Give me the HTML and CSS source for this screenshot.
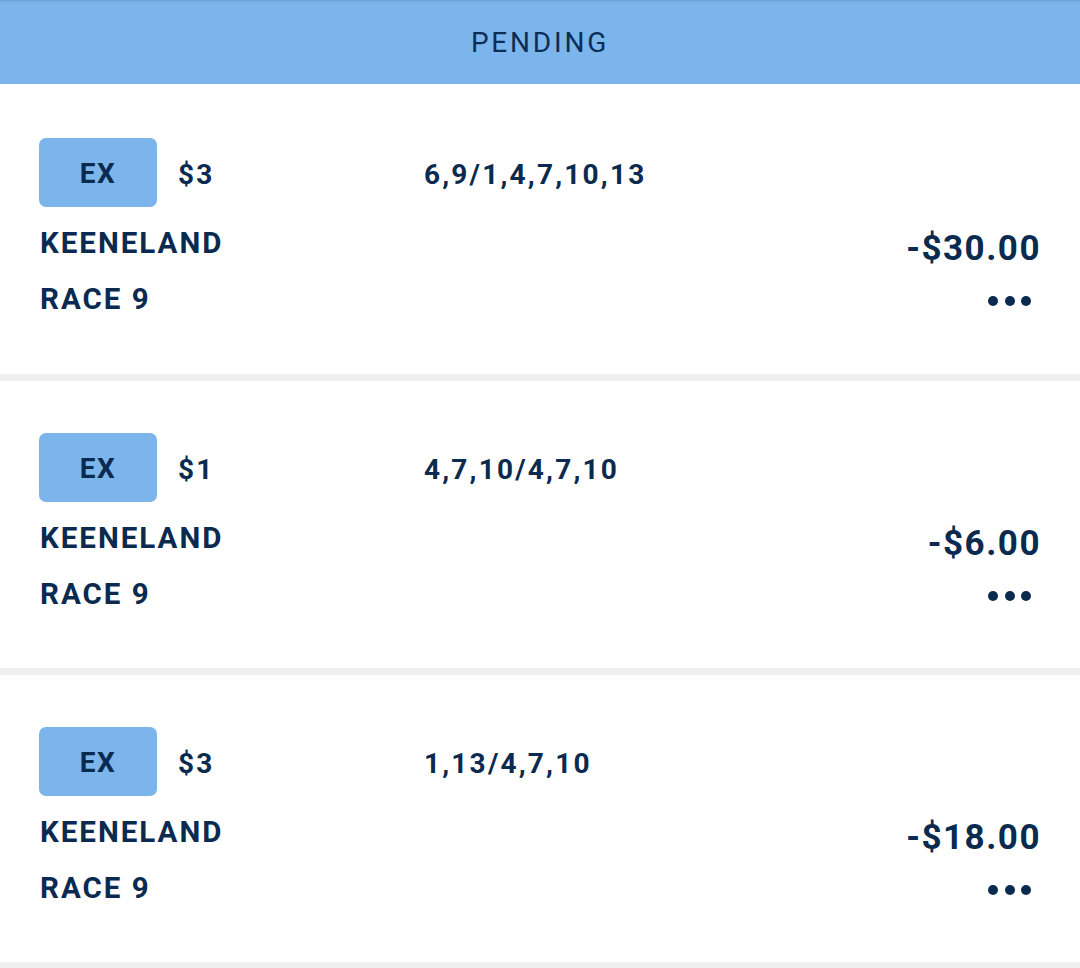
FILE: index.html
```html
<!DOCTYPE html>
<html lang="en">
<head>
	<meta charset="UTF-8">
	<meta name="viewport" content="width=device-width, initial-scale=1.0">
	<title>Pending</title>
	<link rel="stylesheet" href="styles.css">
</head>
<body>
	<div class="header">PENDING</div>

	<div class="bets">
		<div class="bet">
			<div class="betTop">
				<div class="betLeft">
					<span class="badge">EX</span>
					<span class="stake">$3</span>
				</div>
				<span class="legs">6,9/1,4,7,10,13</span>
			</div>
			<div class="betBottom">
				<div class="track">
					<p>KEENELAND</p>
					<p>RACE 9</p>
				</div>
				<div class="total">
					<p class="amount">-$30.00</p>
					<p class="more"><i></i><i></i><i></i></p>
				</div>
			</div>
		</div>

		<div class="bet">
			<div class="betTop">
				<div class="betLeft">
					<span class="badge">EX</span>
					<span class="stake">$1</span>
				</div>
				<span class="legs">4,7,10/4,7,10</span>
			</div>
			<div class="betBottom">
				<div class="track">
					<p>KEENELAND</p>
					<p>RACE 9</p>
				</div>
				<div class="total">
					<p class="amount">-$6.00</p>
					<p class="more"><i></i><i></i><i></i></p>
				</div>
			</div>
		</div>

		<div class="bet">
			<div class="betTop">
				<div class="betLeft">
					<span class="badge">EX</span>
					<span class="stake">$3</span>
				</div>
				<span class="legs">1,13/4,7,10</span>
			</div>
			<div class="betBottom">
				<div class="track">
					<p>KEENELAND</p>
					<p>RACE 9</p>
				</div>
				<div class="total">
					<p class="amount">-$18.00</p>
					<p class="more"><i></i><i></i><i></i></p>
				</div>
			</div>
		</div>
	</div>
</body>
</html>
```

FILE: styles.css
```css
body {
	margin: 0;
	background: #f0f0f0;
	font-family: Roboto, "Liberation Sans", sans-serif;
	color: #0a2b4f;
}

p { margin: 0; }

.header {
	height: 84px;
	line-height: 86px;
	text-align: center;
	background: #7bb5ec;
	box-shadow: inset 0 3px 3px -2px rgba(0,0,0,0.12);
	font-size: 28px;
	letter-spacing: 2.8px;
	color: #0c2d55;
}

.bets > .bet:first-child { padding-top: 54px; padding-bottom: 45px; }

.bet {
	background: #fff;
	padding: 52px 40px 44px 39px;
	margin-bottom: 7px;
}

.betTop { display: flex; align-items: center; }

.betLeft {
	display: flex;
	align-items: center;
	width: 385px;
}

.badge {
	width: 118px;
	height: 69px;
	line-height: 72px;
	border-radius: 7px;
	background: #7bb5ec;
	text-align: center;
	font-weight: bold;
	font-size: 28px;
	letter-spacing: 1.5px;
}

.stake, .legs {
	font-weight: bold;
	font-size: 28px;
	letter-spacing: 2.2px;
	padding-top: 3px;
}

.stake { margin-left: 21px; }

.betBottom {
	display: flex;
	justify-content: space-between;
	margin-top: 8px;
}

.track p {
	font-weight: bold;
	font-size: 29.5px;
	letter-spacing: 2px;
	line-height: 56px;
	margin-left: 1px;
}

.total {
	display: flex;
	flex-direction: column;
	align-items: flex-end;
	padding-top: 6px;
}

.amount {
	font-weight: bold;
	font-size: 35px;
	letter-spacing: 1.5px;
	line-height: 56px;
	margin-right: -1px;
}

.more {
	display: flex;
	gap: 6.5px;
	height: 56px;
	align-items: center;
	margin-right: 9px;
	margin-top: -4px;
}

.more i {
	width: 10px;
	height: 10px;
	border-radius: 50%;
	background: #0a2b4f;
}
```
